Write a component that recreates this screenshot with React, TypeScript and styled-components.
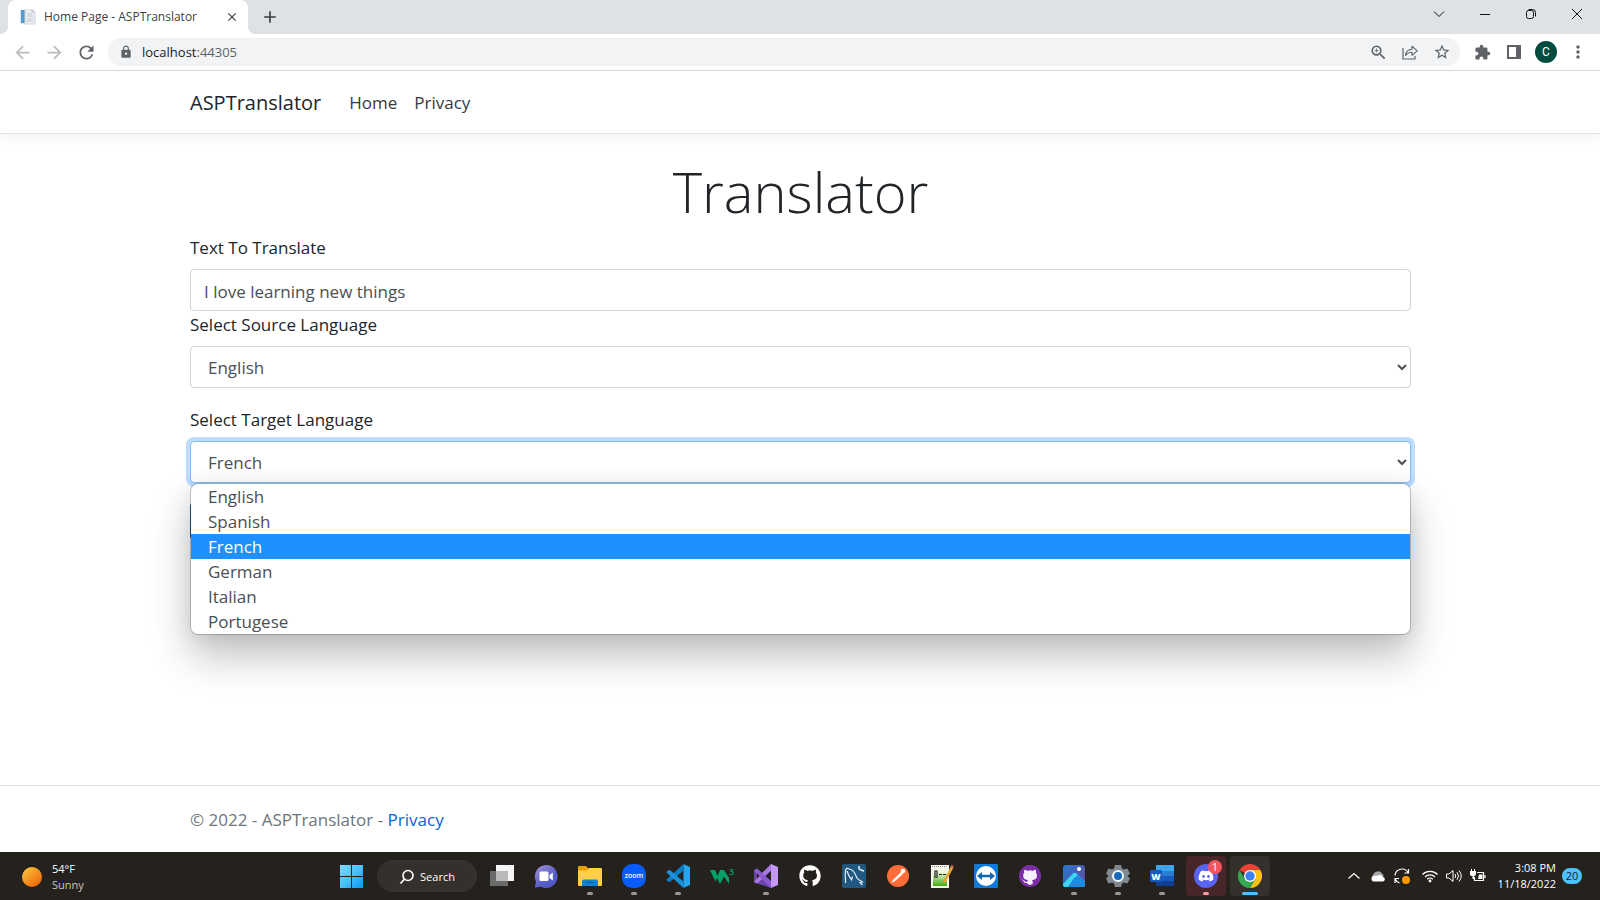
import React from "react";
import styled, { createGlobalStyle, css } from "styled-components";
import {
  MdAdd,
  MdArrowBack,
  MdArrowForward,
  MdClose,
  MdExtension,
  MdLock,
  MdMoreVert,
  MdRefresh,
  MdStarBorder,
  MdZoomIn,
} from "react-icons/md";
import { FaDiscord, FaGithub } from "react-icons/fa";

const GlobalStyle = createGlobalStyle`
  *, *::before, *::after { box-sizing: border-box; }
  body {
    margin: 0;
    background: #fff;
    color: #212529;
    font-family: "Open Sans", "Noto Sans", sans-serif;
    font-size: 17px;
    line-height: 26px;
  }
  button { font: inherit; cursor: pointer; }
`;

const Shell = styled.div`
  display: flex;
  flex-direction: column;
  min-height: 100vh;
`;

/* ---------- browser chrome ---------- */

const TabStrip = styled.div`
  display: flex;
  align-items: center;
  height: 34px;
  padding-left: 8px;
  background: #dee1e6;
`;

const Tab = styled.div`
  position: relative;
  display: flex;
  align-items: center;
  align-self: stretch;
  width: 240px;
  padding: 0 8px 0 12px;
  background: #fff;
  border-radius: 8px 8px 0 0;

  &::before,
  &::after {
    content: "";
    position: absolute;
    bottom: 0;
    width: 8px;
    height: 8px;
  }
  &::before {
    right: 100%;
    background: radial-gradient(circle at 0 0, transparent 8px, #fff 8px);
  }
  &::after {
    left: 100%;
    background: radial-gradient(circle at 100% 0, transparent 8px, #fff 8px);
  }
`;

const TabTitle = styled.span`
  flex: 1;
  margin-left: 8px;
  color: #3c4043;
  font-size: 12px;
  line-height: 16px;
  white-space: nowrap;
`;

const PlainButton = styled.button<{ $width: number }>`
  display: flex;
  align-items: center;
  justify-content: center;
  width: ${(p) => p.$width}px;
  height: ${(p) => Math.min(p.$width, 32)}px;
  padding: 0;
  border: 0;
  background: transparent;
  color: #5f6368;
  flex: none;
`;

const NewTabButton = styled(PlainButton)`
  margin-left: 8px;
  color: #3c4043;
`;

const WindowControls = styled.div`
  display: flex;
  margin-left: auto;
  padding-bottom: 6px;
`;

const Toolbar = styled.div`
  display: flex;
  align-items: center;
  height: 37px;
  padding: 0 6px;
  border-bottom: 1px solid #dadce0;
`;

const AddressBar = styled.div`
  display: flex;
  flex: 1;
  align-items: center;
  height: 28px;
  margin: 0 6px 0 6px;
  padding: 0 2px 0 11px;
  border-radius: 14px;
  background: #f1f3f4;
`;

const Url = styled.span`
  flex: 1;
  margin-left: 9px;
  color: #5f6368;
  font-size: 13px;
  line-height: 20px;
  b {
    color: #202124;
    font-weight: 400;
  }
`;

const Avatar = styled.span`
  display: flex;
  align-items: center;
  justify-content: center;
  width: 22px;
  height: 22px;
  border-radius: 50%;
  background: #004d40;
  color: #fff;
  font: 12px/22px Roboto, sans-serif;
`;

/* ---------- web page ---------- */

const Container = styled.div`
  width: 100%;
  max-width: 1254px;
  margin: 0 auto;
  padding: 0 16px 0 17px;
`;

const Header = styled.header`
  border-bottom: 1px solid #dee2e6;
  box-shadow: 0 4px 13px rgba(0, 0, 0, 0.05);
`;

const Nav = styled.nav`
  display: flex;
  align-items: center;
  height: 62px;
  padding-top: 2px;
`;

const Brand = styled.a`
  margin-right: 28px;
  color: #212529;
  font-size: 20px;
  text-decoration: none;
`;

const NavLink = styled.a`
  margin-right: 17px;
  color: #343a40;
  text-decoration: none;
`;

const Main = styled.main`
  flex: 1;
  padding: 20px 0;
`;

const Title = styled.h1`
  margin: 0 0 7px;
  font-size: 56px;
  font-weight: 300;
  line-height: 74px;
  text-align: center;
`;

const Field = styled.div<{ $gap: number }>`
  position: relative;
  margin-bottom: ${(p) => p.$gap}px;
`;

const Label = styled.label`
  display: block;
  margin-bottom: 8px;
`;

const control = css`
  display: block;
  width: 100%;
  height: 42px;
  border: 1px solid #ced4da;
  border-radius: 4px;
  background: #fff;
  color: #495057;
  font: inherit;
  outline: 0;
`;

const TextInput = styled.input`
  ${control}
  padding: 2px 13px 0;
`;

const Select = styled.select<{ $open?: boolean }>`
  ${control}
  padding: 1px 13px 0;
  ${(p) =>
    p.$open &&
    css`
      border-color: #80bdff;
      box-shadow: 0 0 0 4px rgba(0, 123, 255, 0.25);
    `}
`;

const Options = styled.ul`
  position: absolute;
  z-index: 2;
  top: 100%;
  left: 0;
  right: 0;
  margin: 0;
  padding: 0;
  overflow: hidden;
  border: 1px solid rgba(0, 0, 0, 0.2);
  border-radius: 8px;
  background: #fff;
  background-clip: padding-box;
  box-shadow: 0 22px 40px rgba(0, 0, 0, 0.24), 0 2px 20px rgba(0, 0, 0, 0.08);
  list-style: none;
`;

const Option = styled.li<{ $active: boolean }>`
  padding-left: 17px;
  line-height: 25px;
  background: ${(p) => (p.$active ? "#1e90ff" : "transparent")};
  color: ${(p) => (p.$active ? "#fff" : "#495057")};
`;

const SubmitButton = styled.button`
  display: block;
  width: 100px;
  height: 38px;
  border: 1px solid #1861ac;
  border-radius: 4px;
  background: #1b6ec2;
`;

const Footer = styled.footer`
  padding-top: 2px;
  border-top: 1px solid #dee2e6;
  color: #6c757d;
  line-height: 64px;
  a {
    color: #0366d6;
    text-decoration: none;
  }
`;

/* ---------- taskbar ---------- */

const Taskbar = styled.div`
  display: grid;
  grid-template-columns: 1fr auto 1fr;
  align-items: center;
  height: 48px;
  padding: 0 18px 0 20px;
  background: #25211d;
  color: #fff;
  font-size: 11px;
  line-height: 16px;
`;

const Weather = styled.div`
  display: flex;
  align-items: center;
  gap: 10px;
  padding: 2px 0 0 2px;
  small {
    display: block;
    color: #c8c6c4;
    font-size: 11px;
  }
`;

const Apps = styled.div`
  display: flex;
  align-items: center;
  gap: 4px;
`;

const AppButton = styled.button<{ $tile?: string }>`
  position: relative;
  display: flex;
  align-items: center;
  justify-content: center;
  width: 40px;
  height: 40px;
  padding: 0;
  border: 0;
  border-radius: 4px;
  background: ${(p) => p.$tile || "transparent"};
`;

const Running = styled.span<{ $color: string; $wide?: boolean }>`
  position: absolute;
  bottom: 1px;
  left: 50%;
  width: ${(p) => (p.$wide ? 16 : 6)}px;
  height: 3px;
  margin-left: ${(p) => (p.$wide ? -8 : -3)}px;
  border-radius: 2px;
  background: ${(p) => p.$color};
`;

const Badge = styled.span`
  position: absolute;
  top: 4px;
  right: 4px;
  width: 14px;
  height: 14px;
  border-radius: 50%;
  background: #f0565b;
  color: #fff;
  font-size: 11px;
  line-height: 14px;
`;

const SearchButton = styled.button`
  display: flex;
  align-items: center;
  justify-content: center;
  gap: 5px;
  width: 100px;
  height: 32px;
  margin: 0 1px;
  padding: 2px 0 0;
  border: 1px solid #38342f;
  border-radius: 16px;
  background: #34302b;
  color: #fff;
  font-size: 11px;
  font-weight: 500;
  line-height: 16px;
`;

const Tray = styled.div`
  display: flex;
  align-items: center;
  justify-content: flex-end;
`;

const TrayIcons = styled.div`
  display: flex;
  align-items: center;
  gap: 8px;
  margin-right: 12px;
`;

const Clock = styled.div`
  margin-right: 6px;
  text-align: right;
`;

const Notifications = styled.span`
  width: 20px;
  height: 16px;
  border-radius: 8px;
  background: #4cc2ff;
  color: #1b1b1b;
  font-size: 11px;
  line-height: 16px;
  text-align: center;
`;

/* ---------- drawings ---------- */

const Svg = ({ size = 24, children }: { size?: number; children: React.ReactNode }) => (
  <svg width={size} height={size} viewBox={`0 0 ${size} ${size}`} fill="none" aria-hidden="true">
    {children}
  </svg>
);

const PageIcon = () => (
  <Svg size={16}>
    <path d="M0 1h11v14H0z" fill="#dfe5ea" />
    <path d="M1 1h4v13H1z" fill="#4d9fd6" />
    <path d="M5 0h7l3 3v12H5z" fill="#eceff2" stroke="#cfd4da" />
    <path d="M12 0v3h3" stroke="#b9c0c8" />
    <path d="M7 5h5M7 7h6M7 10h6M7 12h6" stroke="#c3c9d0" />
  </Svg>
);

const ShareIcon = () => (
  <Svg size={18}>
    <path d="M2 5v11h12v-3" stroke="#5f6368" strokeWidth="1.2" />
    <path
      d="M4.500 12.500C5 8.500 7.500 6.500 11 6.300V3.200L16.200 7.800L11 12.300V9.200C8.300 9.200 6.300 10 4.500 12.500Z"
      stroke="#5f6368"
      strokeWidth="1.100"
      strokeLinejoin="round"
    />
  </Svg>
);

const PanelIcon = () => (
  <Svg size={14}>
    <path d="M0 0h14v14H0zM2 2v10h7V2z" fill="#5f6368" fillRule="evenodd" />
  </Svg>
);

const windowPaths: [string, string][] = [
  ["Search tabs", "M3 5.500L8 10.500L13 5.500"],
  ["Minimize", "M3 8.500H13"],
  ["Restore", "M3.500 6.500a2 2 0 0 1 2-2h3a2 2 0 0 1 2 2v4a2 2 0 0 1-2 2h-3a2 2 0 0 1-2-2zM5.500 3.500h4a3 3 0 0 1 3 3v4"],
  ["Close", "M3 3L13 13M13 3L3 13"],
];

const Icons = {
  start: (
    <Svg>
      <defs>
        <linearGradient id="win" x1="0" y1="0" x2="24" y2="24" gradientUnits="userSpaceOnUse">
          <stop stopColor="#83dcff" />
          <stop offset=".5" stopColor="#45c3fb" />
          <stop offset="1" stopColor="#0693fb" />
        </linearGradient>
      </defs>
      <path d="M0 1h11v11H0zM12 1h11v11H12zM0 13h11v11H0zM12 13h11v11H12z" fill="url(#win)" />
    </Svg>
  ),
  taskView: (
    <Svg>
      <path d="M6 1h18v16H6z" fill="#f5f5f5" />
      <path d="M0 7h18v15H0z" fill="#6b6b6b" />
      <path d="M6 7h12v10H6z" fill="#b9b9b9" />
    </Svg>
  ),
  chat: (
    <Svg>
      <defs>
        <linearGradient id="chat" x1="4" y1="2" x2="20" y2="22" gradientUnits="userSpaceOnUse">
          <stop stopColor="#9a8fd8" />
          <stop offset=".6" stopColor="#5b5fc7" />
          <stop offset="1" stopColor="#5059c9" />
        </linearGradient>
      </defs>
      <path d="M12 1a11.500 11.500 0 1 1-5 21.800L.8 23.500L2 17.500A11.500 11.500 0 0 1 12 1z" fill="url(#chat)" />
      <rect x="5.500" y="7.500" width="9" height="9.500" rx="1.500" fill="#fff" />
      <path d="M15.500 11L18.800 8.500V16.500L15.500 14z" fill="#fff" />
    </Svg>
  ),
  explorer: (
    <Svg>
      <path d="M0 3a1 1 0 0 1 1-1h7l2.500 2.500V9H0z" fill="#e8a100" />
      <path d="M0 6.500h9L11 4h12a1 1 0 0 1 1 1v16a1 1 0 0 1-1 1H1a1 1 0 0 1-1-1z" fill="#ffcf48" />
      <path d="M4 22v-4.500A2 2 0 0 1 6 15.500h12a2 2 0 0 1 2 2V22z" fill="#1480d0" />
      <path d="M8 18.500h8" stroke="#0a5fa5" />
    </Svg>
  ),
  zoom: (
    <Svg>
      <rect width="24" height="24" rx="10" fill="#0b5cff" />
      <text x="12" y="14" textAnchor="middle" fill="#fff" fontFamily="Open Sans, sans-serif" fontSize="7" fontWeight="600">
        zoom
      </text>
    </Svg>
  ),
  vscode: (
    <Svg>
      <path d="M17.500 0L24 3v18l-6.500 3z" fill="#24a5ee" />
      <path d="M17.500 0v6.500L3.500 18.200L0 16z" fill="#0a7dc9" />
      <path d="M17.500 24v-6.500L3.500 5.800L0 8z" fill="#1b91dc" />
    </Svg>
  ),
  w3: (
    <Svg>
      <path d="M0 6h5l2.500 6L10 6h4l5 8v6L14 12.500L10 20L7 14L5.500 17.500z" fill="#04a06a" />
      <text x="19" y="11" fill="#04a06a" fontFamily="Open Sans, sans-serif" fontSize="9" fontWeight="600">
        3
      </text>
    </Svg>
  ),
  visualStudio: (
    <Svg>
      <path d="M0 6l3-1.500L17 17v7L3 19.500L0 18z" fill="#6b45a8" />
      <path d="M0 18l3 1.500L17 7V0L6 11z" fill="#a878e0" />
      <path d="M3 4.500L17 17v7L0 7z" fill="#8a5bd0" />
      <path d="M3 9.500v5L5.500 12z" fill="#25211d" />
      <path d="M17 7.500v9L11.500 12z" fill="#25211d" />
      <path d="M17 0l7 3v18l-7 3z" fill="#c698f5" />
    </Svg>
  ),
  github: <FaGithub size={22} color="#fff" />,
  mysql: (
    <Svg>
      <rect width="24" height="24" rx="2" fill="#20587f" />
      <path
        d="M3.500 19C4 15 2.500 12 3.500 7.500C3.500 4.500 5 3.500 7 5C11 5.500 13 8.500 14.500 13C15.500 16 18 16 20.500 18L18 18.500L20.500 21M5 7C6 10 7 12.500 9.500 16L10.500 12.500"
        stroke="#e6eff5"
        strokeWidth="1.200"
      />
      <path d="M17 2v2.500l2 1.500l3 1" stroke="#e6eff5" strokeWidth="1.500" />
    </Svg>
  ),
  postman: (
    <Svg>
      <circle cx="12" cy="12" r="11" fill="#ff6c37" />
      <path d="M5 19L7 16L15 8L17 10L9 17z" fill="#fff" />
      <circle cx="17" cy="7" r="2.300" fill="#fff" />
    </Svg>
  ),
  notepad: (
    <Svg>
      <defs>
        <linearGradient id="note" x1="0" y1="8" x2="0" y2="22" gradientUnits="userSpaceOnUse">
          <stop stopColor="#f1f7dc" />
          <stop offset="1" stopColor="#3fae10" />
        </linearGradient>
      </defs>
      <path d="M1 1h18v23H1z" fill="#f5f7ef" />
      <path d="M3 6h14v16H3z" fill="url(#note)" />
      <path d="M2 2.500h16" stroke="#9b8585" strokeDasharray="1 1" />
      <path d="M5 14V7h2v7M9 10.500h3M13 10.500h3" stroke="#222" strokeWidth="1.200" />
      <path d="M13 20l1-4L21 2l2.500 1.500L16 17.500z" fill="#e9a52c" />
      <path d="M20.500 2.500L21.500 .5L24 2L23 4z" fill="#b5554f" />
    </Svg>
  ),
  teamviewer: (
    <Svg>
      <rect width="24" height="24" rx="1" fill="#0e7bd8" />
      <circle cx="12" cy="12" r="10" fill="#fff" />
      <path d="M3 12l5-4v2.800h8V8l5 4l-5 4v-2.800H8V16z" fill="#0e66b8" />
    </Svg>
  ),
  githubDesktop: (
    <Svg>
      <circle cx="12" cy="12" r="9" fill="#f6f0fa" />
      <FaGithub x={1} y={1} size={22} color="#7a2fa8" />
      <circle cx="12" cy="12" r="10" stroke="#7a2fa8" strokeWidth="2" />
    </Svg>
  ),
  photos: (
    <Svg>
      <defs>
        <linearGradient id="ph" x1="2" y1="2" x2="22" y2="14" gradientUnits="userSpaceOnUse">
          <stop stopColor="#2878cc" />
          <stop offset="1" stopColor="#5b50a8" />
        </linearGradient>
      </defs>
      <rect x="1" y="1" width="22" height="22" rx="3" fill="url(#ph)" />
      <path d="M1 20L11 9.500Q13 8 15 10L23 18v3q0 2-2 2H3q-2 0-2-2z" fill="#3fd3f4" />
      <path d="M12 14L6 23h15q2 0 2-2v-3l-8-8q1 2-3 4z" fill="#1c8ae0" />
      <circle cx="17" cy="5" r="2" fill="#fff" />
    </Svg>
  ),
  settings: (
    <Svg>
      <path
        d="M9 1h6l1 3.500l2 1L21.500 4.500L24 9.500L21.500 12L24 14.500L21.500 19.500L18 18.500L16 19.500L15 23H9L8 19.500L6 18.500L2.500 19.500L0 14.500L2.500 12L0 9.500L2.500 4.500L6 5.500L8 4.500z"
        fill="#7f8992"
      />
      <circle cx="12" cy="12" r="5" fill="#1668b8" stroke="#f2f5f8" strokeWidth="2" />
    </Svg>
  ),
  word: (
    <Svg>
      <path d="M6 1h18v6H6z" fill="#41a5ee" />
      <path d="M6 7h18v5H6z" fill="#2b7cd3" />
      <path d="M6 12h18v5H6z" fill="#185abd" />
      <path d="M6 17h18v5H6z" fill="#103f91" />
      <rect y="6" width="12" height="12" rx="1" fill="#185abd" />
      <text x="6" y="15.500" textAnchor="middle" fill="#fff" fontFamily="Open Sans, sans-serif" fontSize="9" fontWeight="800">
        W
      </text>
    </Svg>
  ),
  chrome: (
    <Svg>
      <path d="M12 12L1.600 6A12 12 0 0 1 22.400 6z" fill="#ea4335" />
      <path d="M12 12V6H22.400A12 12 0 0 1 12 24L17.200 15z" fill="#fbc116" />
      <path d="M12 12L17.200 15L12 24A12 12 0 0 1 1.600 6L6.800 15z" fill="#34a853" />
      <circle cx="12" cy="12" r="6" fill="#fff" />
      <circle cx="12" cy="12" r="4.700" fill="#3b82f0" />
    </Svg>
  ),
};

const DiscordIcon = () => (
  <Svg>
    <circle cx="12" cy="12" r="12" fill="#5865f2" />
    <FaDiscord x={4} y={4} size={16} color="#fff" />
  </Svg>
);

type App = { name: string; icon: React.ReactNode; running?: boolean };

const apps: App[] = [
  { name: "Task View", icon: Icons.taskView },
  { name: "Chat", icon: Icons.chat },
  { name: "File Explorer", icon: Icons.explorer, running: true },
  { name: "Zoom", icon: Icons.zoom, running: true },
  { name: "Visual Studio Code", icon: Icons.vscode, running: true },
  { name: "W3Schools", icon: Icons.w3 },
  { name: "Visual Studio", icon: Icons.visualStudio, running: true },
  { name: "GitHub", icon: Icons.github },
  { name: "MySQL Workbench", icon: Icons.mysql },
  { name: "Postman", icon: Icons.postman },
  { name: "Notepad++", icon: Icons.notepad },
  { name: "TeamViewer", icon: Icons.teamviewer },
  { name: "GitHub Desktop", icon: Icons.githubDesktop },
  { name: "Photos", icon: Icons.photos, running: true },
  { name: "Settings", icon: Icons.settings, running: true },
  { name: "Word", icon: Icons.word, running: true },
];

const languages = ["English", "Spanish", "French", "German", "Italian", "Portugese"];

export default function App() {
  return (
    <Shell>
      <GlobalStyle />

      <TabStrip>
        <Tab>
          <PageIcon />
          <TabTitle>Home Page - ASPTranslator</TabTitle>
          <PlainButton $width={16} aria-label="Close tab">
            <MdClose size={14} color="#3c4043" />
          </PlainButton>
        </Tab>
        <NewTabButton $width={28} aria-label="New tab">
          <MdAdd size={20} />
        </NewTabButton>
        <WindowControls>
          {windowPaths.map(([name, d]) => (
            <PlainButton key={name} $width={46} aria-label={name}>
              <Svg size={16}>
                <path d={d} stroke="#111" />
              </Svg>
            </PlainButton>
          ))}
        </WindowControls>
      </TabStrip>

      <Toolbar>
        <PlainButton $width={32} aria-label="Back">
          <MdArrowBack size={21} color="#babcbe" />
        </PlainButton>
        <PlainButton $width={32} aria-label="Forward">
          <MdArrowForward size={21} color="#babcbe" />
        </PlainButton>
        <PlainButton $width={32} aria-label="Reload">
          <MdRefresh size={21} />
        </PlainButton>
        <AddressBar>
          <MdLock size={14} color="#5f6368" />
          <Url>
            <b>localhost</b>:44305
          </Url>
          <PlainButton $width={32} aria-label="Zoom">
            <MdZoomIn size={19} />
          </PlainButton>
          <PlainButton $width={32} aria-label="Share">
            <ShareIcon />
          </PlainButton>
          <PlainButton $width={32} aria-label="Bookmark this tab">
            <MdStarBorder size={18} />
          </PlainButton>
        </AddressBar>
        <PlainButton $width={32} aria-label="Extensions">
          <MdExtension size={17} />
        </PlainButton>
        <PlainButton $width={32} aria-label="Side panel">
          <PanelIcon />
        </PlainButton>
        <PlainButton $width={32} aria-label="Profile">
          <Avatar>C</Avatar>
        </PlainButton>
        <PlainButton $width={32} aria-label="Menu">
          <MdMoreVert size={20} />
        </PlainButton>
      </Toolbar>

      <Header>
        <Container>
          <Nav>
            <Brand href="#">ASPTranslator</Brand>
            <NavLink href="#">Home</NavLink>
            <NavLink href="#">Privacy</NavLink>
          </Nav>
        </Container>
      </Header>

      <Main>
        <Container>
          <Title>Translator</Title>
          <Field $gap={1}>
            <Label htmlFor="text">Text To Translate</Label>
            <TextInput id="text" type="text" defaultValue="I love learning new things" />
          </Field>
          <Field $gap={19}>
            <Label htmlFor="source">Select Source Language</Label>
            <Select id="source" defaultValue="English">
              {languages.map((l) => (
                <option key={l}>{l}</option>
              ))}
            </Select>
          </Field>
          <Field $gap={19}>
            <Label htmlFor="target">Select Target Language</Label>
            <Select id="target" defaultValue="French" $open>
              {languages.map((l) => (
                <option key={l}>{l}</option>
              ))}
            </Select>
            <Options role="listbox" aria-label="Target language">
              {languages.map((l) => (
                <Option key={l} role="option" aria-selected={l === "French"} $active={l === "French"}>
                  {l}
                </Option>
              ))}
            </Options>
          </Field>
          <SubmitButton type="submit" aria-label="Translate" />
        </Container>
      </Main>

      <Footer>
        <Container>
          © 2022 - ASPTranslator - <a href="#">Privacy</a>
        </Container>
      </Footer>

      <Taskbar>
        <Weather>
          <Svg size={20}>
            <defs>
              <linearGradient id="sun" x1="3" y1="3" x2="16" y2="18" gradientUnits="userSpaceOnUse">
                <stop stopColor="#f8bd35" />
                <stop offset="1" stopColor="#f0680c" />
              </linearGradient>
            </defs>
            <circle cx="10" cy="10" r="10" fill="url(#sun)" />
          </Svg>
          <div>
            54°F
            <small>Sunny</small>
          </div>
        </Weather>
        <Apps>
          <AppButton aria-label="Start">{Icons.start}</AppButton>
          <SearchButton>
            <Svg size={16}>
              <circle cx="9" cy="6.500" r="5" stroke="#fff" strokeWidth="1.600" />
              <path d="M5.500 10L1.500 14.500" stroke="#fff" strokeWidth="1.800" />
            </Svg>
            Search
          </SearchButton>
          {apps.map((a) => (
            <AppButton key={a.name} aria-label={a.name}>
              {a.icon}
              {a.running && <Running $color="#9b9894" />}
            </AppButton>
          ))}
          <AppButton $tile="#472629" aria-label="Discord">
            <DiscordIcon />
            <Badge>1</Badge>
            <Running $color="#ff99a4" />
          </AppButton>
          <AppButton $tile="#34302c" aria-label="Google Chrome">
            {Icons.chrome}
            <Running $color="#4cc2ff" $wide />
          </AppButton>
        </Apps>
        <Tray>
          <TrayIcons>
            <Svg size={16}>
              <path d="M2.500 10.500L8 5.500L13.500 10.500" stroke="#fff" strokeWidth="1.200" />
            </Svg>
            <Svg size={16}>
              <path d="M4 12a4 4 0 0 1-.5-6A5 5 0 0 1 12 5.500L14 8z" fill="#a8a8a8" />
              <path d="M3.500 13.500a3 3 0 0 1-.5-5.500L8 7.500A4 4 0 0 1 13 9a2.300 2.300 0 0 1 0 4.500z" fill="#fff" />
            </Svg>
            <Svg size={16}>
              <path d="M1 7.500A7 7 0 0 1 14 4.500M14.500 1v4h-4M5.500 15A7 7 0 0 1 1 10.500M1 15v-4.500h4" stroke="#fff" strokeWidth="1.200" />
              <circle cx="12" cy="12" r="4" fill="#ff9a00" />
            </Svg>
          </TrayIcons>
          <TrayIcons>
            <Svg size={16}>
              <path d="M.5 6.500a10.500 10.500 0 0 1 15 0M3 9a7 7 0 0 1 10 0M5.200 11.300a4 4 0 0 1 5.600 0" stroke="#fff" strokeWidth="1.200" />
              <circle cx="8" cy="13" r="1.400" fill="#fff" />
            </Svg>
            <Svg size={16}>
              <path d="M.5 6h2.500l4-3.500v11L3 10H.5z" stroke="#fff" strokeLinejoin="round" />
              <path d="M9 6q1.500 2 0 4M11 4.200q3 3.800 0 7.600M13 2.500q4.500 5.500 0 11" stroke="#fff" />
            </Svg>
            <Svg size={16}>
              <path d="M7 4.500h6.500v8h-9V9M15 7v3" stroke="#fff" strokeWidth="1.200" />
              <path d="M9 6.500h3.500v4.500H8z" fill="#fff" />
              <path d="M0 3h6v3a2 2 0 0 1-2 2v3H2.500V8A2 2 0 0 1 0 6zM1 1h1v2H1zM4 1h1v2H4z" fill="#fff" />
            </Svg>
          </TrayIcons>
          <Clock>
            3:08 PM
            <br />
            11/18/2022
          </Clock>
          <Notifications>20</Notifications>
        </Tray>
      </Taskbar>
    </Shell>
  );
}
